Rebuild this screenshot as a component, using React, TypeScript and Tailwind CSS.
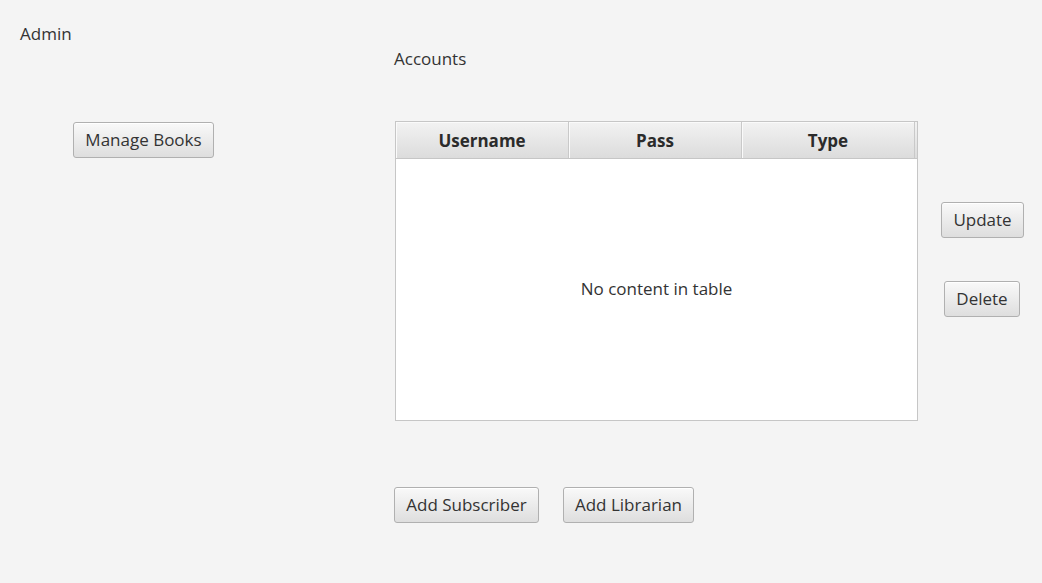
import React from "react";

function FxButton({ label, className = "" }: { label: string; className?: string }) {
  return (
    <button
      className={`h-[36px] whitespace-nowrap rounded-[3px] border border-[#b0b0b0] bg-gradient-to-b from-[#f9f9f9] to-[#dedede] px-0 pb-[1px] text-[17px] leading-none text-[#333333] shadow-[inset_0_1px_0_#ffffff] ${className}`}
    >
      {label}
    </button>
  );
}

const columns = ["Username", "Pass", "Type"];

export default function App() {
  return (
    <div
      className="flex h-[583px] w-[1042px] bg-[#f4f4f4] text-[#333333]"
      style={{ fontFamily: '"Open Sans", "Noto Sans", sans-serif' }}
    >
      {/* left column */}
      <div className="flex w-[394px] flex-col pl-[20px] pt-[23px]">
        <div className="text-[17px] leading-[22px]">Admin</div>
        <div className="mt-[77px] pl-[53px]">
          <FxButton label="Manage Books" className="w-[141px]" />
        </div>
      </div>

      {/* center column */}
      <div className="flex w-[524px] flex-col pt-[48px]">
        <div className="text-[17px] leading-[22px]">Accounts</div>
        <div className="ml-[1px] mt-[51px] flex h-[300px] flex-col border border-[#c6c6c6] bg-white">
          <div className="flex h-[37px] border-b border-[#c6c6c6] bg-gradient-to-b from-[#f2f2f2] to-[#dcdcdc] pr-[2px]">
            {columns.map((c) => (
              <div
                key={c}
                className="flex flex-1 items-center justify-center border-r border-[#c9c9c9] pt-[1px] text-[17px] font-bold text-[#2b2b2b] shadow-[inset_1px_1px_0_#fafafa]"
              >
                {c}
              </div>
            ))}
          </div>
          <div className="flex flex-1 items-center justify-center pb-[1px] text-[17px]">
            No content in table
          </div>
        </div>
        <div className="mt-[66px] flex gap-[24px]">
          <FxButton label="Add Subscriber" className="w-[145px]" />
          <FxButton label="Add Librarian" className="w-[131px]" />
        </div>
      </div>

      {/* right column */}
      <div className="flex flex-col pt-[202px]">
        <div className="pl-[23px]">
          <FxButton label="Update" className="w-[83px]" />
        </div>
        <div className="mt-[43px] pl-[26px]">
          <FxButton label="Delete" className="w-[76px]" />
        </div>
      </div>
    </div>
  );
}
